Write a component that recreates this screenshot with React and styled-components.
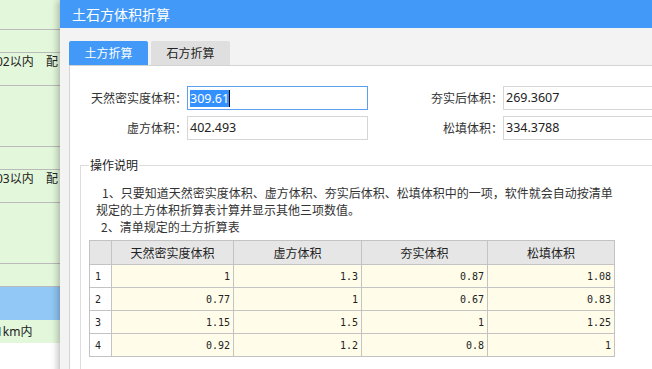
import React from "react";
import styled, { createGlobalStyle } from "styled-components";

const GlobalStyle = createGlobalStyle`
  html, body {
    margin: 0;
    padding: 0;
  }
  body {
    width: 652px;
    height: 369px;
    overflow: hidden;
    background: #ffffff;
    font-family: "Noto Sans", "Noto Sans CJK SC", sans-serif;
    color: #333333;
  }
`;

const SHEET_ROWS = [
  { h: 30 },
  { h: 23 },
  { h: 33, text: "02以内", extra: "配" },
  { h: 61 },
  { h: 23 },
  { h: 33, text: "03以内", extra: "配" },
  { h: 61 },
  { h: 23 },
  { h: 33, blue: true, plain: true },
  { h: 23, text: "1km内", plain: true, centered: true },
];

const FIELDS = [
  ["天然密实度体积：", "309.61", true, "夯实后体积：", "269.3607"],
  ["虚方体积：", "402.493", false, "松填体积：", "334.3788"],
];

const HEADERS = ["天然密实度体积", "虚方体积", "夯实体积", "松填体积"];

const ROWS = [
  ["1", "1.3", "0.87", "1.08"],
  ["0.77", "1", "0.67", "0.83"],
  ["1.15", "1.5", "1", "1.25"],
  ["0.92", "1.2", "0.8", "1"],
];

const App = () => {
  return (
    <Screen>
      <GlobalStyle />
      <Sheet>
        {SHEET_ROWS.map((row, i) => (
          <SheetRow
            key={i}
            $h={row.h}
            $blue={row.blue}
            $plain={row.plain}
            $centered={row.centered}
          >
            {row.text && <SheetText>{row.text}</SheetText>}
            {row.extra && <SheetText $left={46}>{row.extra}</SheetText>}
          </SheetRow>
        ))}
      </Sheet>

      <Dialog>
        <TitleBar>土石方体积折算</TitleBar>
        <DialogBody>
          <Tabs>
            <Tab $active>土方折算</Tab>
            <Tab>石方折算</Tab>
          </Tabs>
          <Panel>
            <Form>
              {FIELDS.map(([l1, v1, focused, l2, v2]) => (
                <React.Fragment key={l1}>
                  <Label>{l1}</Label>
                  <Field $focused={focused}>
                    {focused ? (
                      <>
                        <Selected>{v1}</Selected>
                        <Caret />
                      </>
                    ) : (
                      v1
                    )}
                  </Field>
                  <Label>{l2}</Label>
                  <Field>{v2}</Field>
                </React.Fragment>
              ))}
            </Form>

            <GroupBox>
              <Legend>操作说明</Legend>
              <Notes>
                <NoteLine $indent={6}>
                  1、只要知道天然密实度体积、虚方体积、夯实后体积、松填体积中的一项，软件就会自动按清单
                </NoteLine>
                <NoteLine>规定的土方体积折算表计算并显示其他三项数值。</NoteLine>
                <NoteLine $indent={5}>2、清单规定的土方折算表</NoteLine>
              </Notes>

              <Table>
                <colgroup>
                  <col style={{ width: 22 }} />
                  <col style={{ width: 122 }} />
                  <col style={{ width: 128 }} />
                  <col style={{ width: 126 }} />
                  <col style={{ width: 127 }} />
                </colgroup>
                <thead>
                  <tr>
                    <HeadCell />
                    {HEADERS.map((h) => (
                      <HeadCell key={h}>{h}</HeadCell>
                    ))}
                  </tr>
                </thead>
                <tbody>
                  {ROWS.map((r, i) => (
                    <tr key={i}>
                      <IndexCell>{i + 1}</IndexCell>
                      {r.map((v, j) => (
                        <ValueCell key={j}>{v}</ValueCell>
                      ))}
                    </tr>
                  ))}
                </tbody>
              </Table>
            </GroupBox>
          </Panel>
        </DialogBody>
      </Dialog>
    </Screen>
  );
};

const Screen = styled.div`
  position: relative;
  width: 652px;
  height: 369px;
  overflow: hidden;
`;

const Sheet = styled.div`
  display: flex;
  flex-direction: column;
  width: 100%;
`;

const SheetRow = styled.div`
  position: relative;
  box-sizing: border-box;
  height: ${(p) => p.$h}px;
  background: ${(p) => (p.$blue ? "#91c8f6" : "#e3f7db")};
  border-bottom: ${(p) => (p.$plain ? "none" : "1px solid #bababa")};
  display: flex;
  align-items: ${(p) => (p.$centered ? "center" : "flex-start")};
  padding-top: ${(p) => (p.$centered ? 0 : 1)}px;
`;

const SheetText = styled.span`
  position: absolute;
  left: ${(p) => (p.$left != null ? p.$left : -4)}px;
  font-size: 12px;
  line-height: 16px;
  color: #222222;
  white-space: nowrap;
`;

const Dialog = styled.div`
  position: absolute;
  left: 60px;
  top: 0;
  width: 620px;
  height: 400px;
  background: #f3f3f3;
  box-shadow: -2px 0 7px rgba(0, 0, 0, 0.28);
  display: flex;
  flex-direction: column;
`;

const TitleBar = styled.div`
  height: 28px;
  flex: none;
  background: #4299f7;
  color: #ffffff;
  font-size: 14px;
  line-height: 28px;
  padding-left: 12px;
  font-family: "Noto Sans CJK SC", sans-serif;
`;

const DialogBody = styled.div`
  flex: 1;
  padding: 13px 0 0 9px;
  display: flex;
  flex-direction: column;
`;

const Tabs = styled.div`
  display: flex;
  gap: 3px;
`;

const Tab = styled.div`
  width: 79px;
  height: 24px;
  border-radius: 2px 2px 0 0;
  background: ${(p) => (p.$active ? "#4299f7" : "#dfdfdf")};
  color: ${(p) => (p.$active ? "#ffffff" : "#222222")};
  font-size: 12px;
  line-height: 24px;
  text-align: center;
  font-family: "Noto Sans CJK SC", sans-serif;
`;

const Panel = styled.div`
  flex: 1;
  background: #ffffff;
  border: 1px solid #d3d3d3;
  border-right: none;
`;

const Form = styled.div`
  display: grid;
  grid-template-columns: 117px 181px 135px 181px;
  grid-auto-rows: 24px;
  row-gap: 6px;
  padding-top: 20px;
  align-items: center;
`;

const Label = styled.div`
  text-align: right;
  font-size: 12px;
  line-height: 24px;
  color: #333333;
  white-space: nowrap;
  font-family: "Noto Sans CJK SC", sans-serif;
`;

const Field = styled.div`
  box-sizing: border-box;
  height: 24px;
  border: 1px solid ${(p) => (p.$focused ? "#5a9ff0" : "#d6d6d6")};
  padding-left: 2px;
  font-size: 12.5px;
  line-height: 22px;
  color: #222222;
  display: flex;
  align-items: center;
`;

const Selected = styled.span`
  background: #3390ff;
  color: #ffffff;
  line-height: 17px;
`;

const Caret = styled.span`
  width: 1px;
  height: 17px;
  background: #000000;
`;

const GroupBox = styled.fieldset`
  margin: 17px 0 0 10px;
  padding: 11px 0 0 8px;
  width: 600px;
  height: 230px;
  border: 1px solid #dcdcdc;
  border-right: none;
  border-bottom: none;
`;

const Legend = styled.legend`
  padding: 0 1px;
  font-size: 12px;
  line-height: 16px;
  color: #222222;
  font-family: "Noto Sans CJK SC", sans-serif;
`;

const Notes = styled.div`
  padding-left: 7px;
  font-size: 12px;
  line-height: 17px;
  color: #333333;
  font-family: "Noto Sans CJK SC", sans-serif;
`;

const NoteLine = styled.div`
  white-space: nowrap;
  text-indent: ${(p) => p.$indent || 0}px;
`;

const Table = styled.table`
  margin-top: 5px;
  width: 526px;
  table-layout: fixed;
  border-collapse: collapse;
  border: 1px solid #c3c3c3;
`;

const HeadCell = styled.th`
  height: 23px;
  padding: 0;
  border: 1px solid #c3c3c3;
  background: #e6e6e6;
  font-weight: normal;
  font-size: 12px;
  color: #222222;
  text-align: center;
  font-family: "Noto Sans CJK SC", sans-serif;
`;

const IndexCell = styled.td`
  height: 22px;
  padding: 0 0 0 5px;
  border: 1px solid #c3c3c3;
  background: #ffffff;
  font-family: "DejaVu Sans Mono", monospace;
  font-size: 10px;
  color: #222222;
`;

const ValueCell = styled.td`
  height: 22px;
  padding: 0 3px 0 0;
  border: 1px solid #c3c3c3;
  background: #fffdea;
  text-align: right;
  font-family: "DejaVu Sans Mono", monospace;
  font-size: 10px;
  color: #222222;
`;

export default App;
